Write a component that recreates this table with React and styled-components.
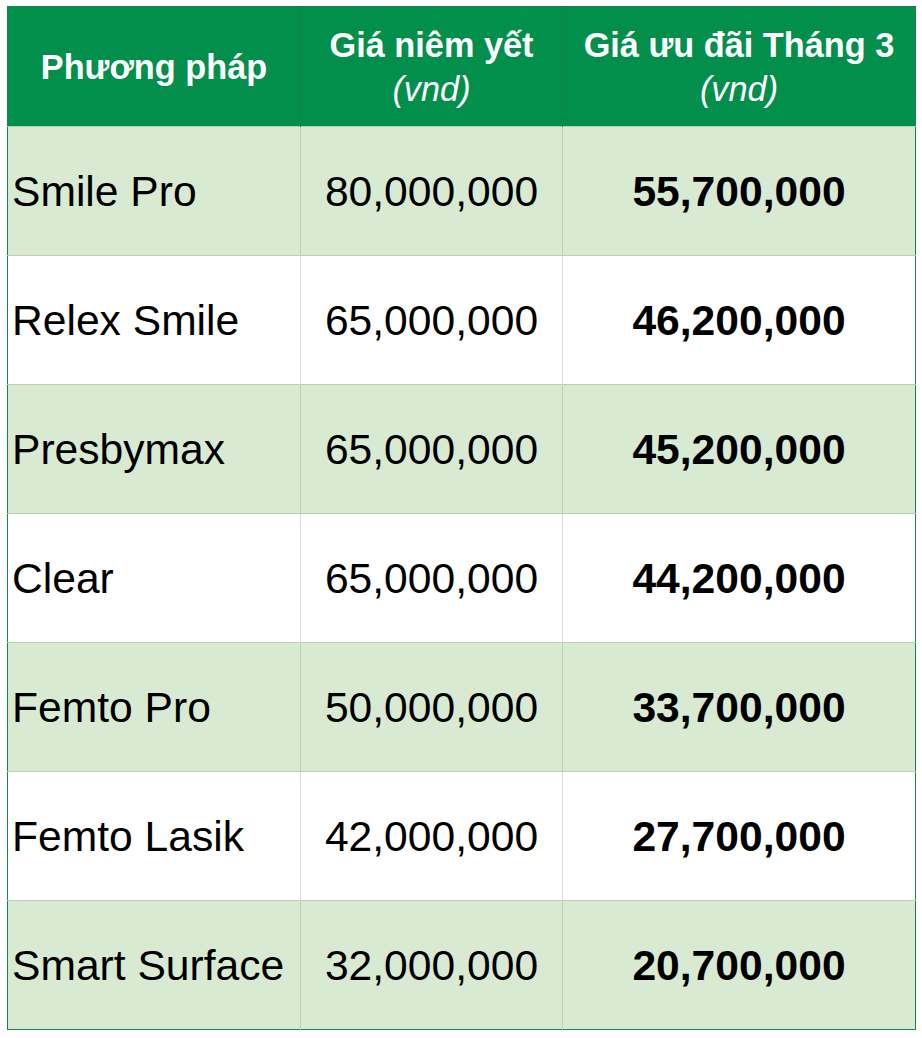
import React from "react";
import styled, { createGlobalStyle } from "styled-components";

const Global = createGlobalStyle`
  html, body { margin: 0; padding: 0; background: #ffffff; }
  body { font-family: "Liberation Sans", Arial, sans-serif; }
`;

const Wrap = styled.div`
  padding: 6px 0 0 7px;
`;

const Table = styled.table`
  border-collapse: collapse;
  table-layout: fixed;
  width: 908px;
  border: 1px solid #13844d;
  font-family: "Liberation Sans", Arial, sans-serif;
`;

const HeadCell = styled.th`
  height: 119px;
  padding: 0;
  background: #028f4c;
  color: #ffffff;
  font-weight: bold;
  font-size: 34.3px;
  line-height: 44px;
  text-align: center;
  vertical-align: middle;
  white-space: nowrap;
  border-right: 1px solid #12824a;
  &:last-child { border-right: none; }
`;

const Unit = styled.span`
  display: block;
  font-weight: normal;
  font-style: italic;
`;

const Row = styled.tr`
  background: ${(p) => (p.$shaded ? "#d9ead3" : "#ffffff")};
  border-top: 1px solid #b9cfb1;
`;

const Cell = styled.td`
  height: 128px;
  padding: 0 0 0 ${(p) => (p.$align === "left" ? "4px" : "0")};
  font-size: 42.6px;
  color: #000000;
  font-weight: ${(p) => (p.$bold ? "bold" : "normal")};
  text-align: ${(p) => p.$align || "center"};
  vertical-align: middle;
  white-space: nowrap;
  border-right: 1px solid ${(p) => (p.$shaded ? "#bcd2b5" : "#dadada")};
  &:last-child { border-right: none; }
`;

const rows = [
  ["Smile Pro", "80,000,000", "55,700,000"],
  ["Relex Smile", "65,000,000", "46,200,000"],
  ["Presbymax", "65,000,000", "45,200,000"],
  ["Clear", "65,000,000", "44,200,000"],
  ["Femto Pro", "50,000,000", "33,700,000"],
  ["Femto Lasik", "42,000,000", "27,700,000"],
  ["Smart Surface", "32,000,000", "20,700,000"],
];

export default function App() {
  return (
    <Wrap>
      <Global />
      <Table>
        <colgroup>
          <col style={{ width: "293px" }} />
          <col style={{ width: "262px" }} />
          <col style={{ width: "353px" }} />
        </colgroup>
        <thead>
          <tr>
            <HeadCell>Phương pháp</HeadCell>
            <HeadCell>
              Giá niêm yết
              <Unit>(vnd)</Unit>
            </HeadCell>
            <HeadCell>
              Giá ưu đãi Tháng 3
              <Unit>(vnd)</Unit>
            </HeadCell>
          </tr>
        </thead>
        <tbody>
          {rows.map((r, i) => {
            const shaded = i % 2 === 0;
            return (
              <Row key={r[0]} $shaded={shaded}>
                <Cell $align="left" $shaded={shaded}>{r[0]}</Cell>
                <Cell $shaded={shaded}>{r[1]}</Cell>
                <Cell $bold $shaded={shaded}>{r[2]}</Cell>
              </Row>
            );
          })}
        </tbody>
      </Table>
    </Wrap>
  );
}
